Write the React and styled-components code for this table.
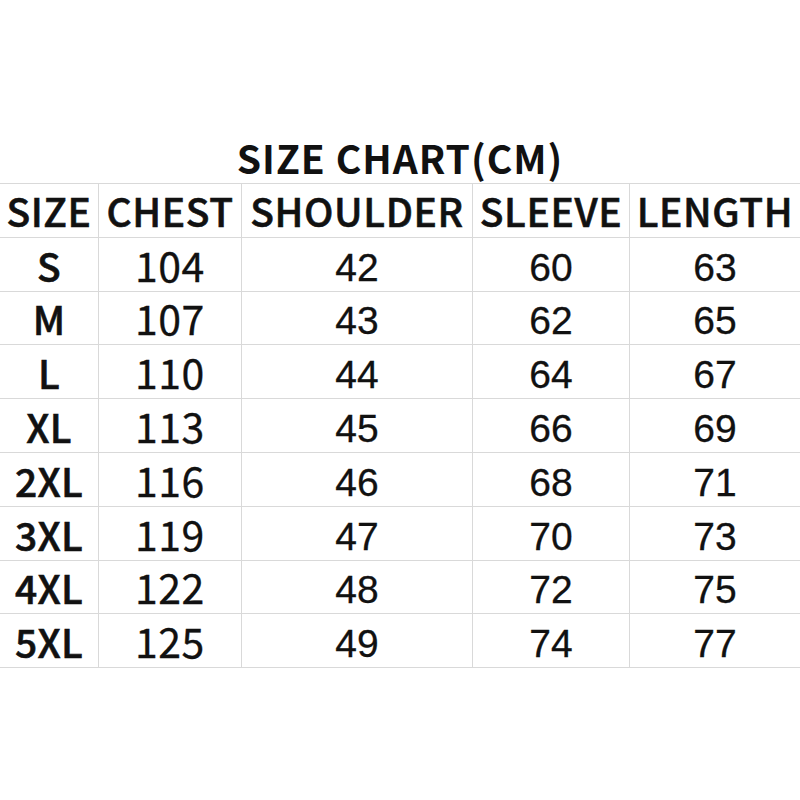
import React from "react";
import styled, { createGlobalStyle } from "styled-components";

const Global = createGlobalStyle`
  html, body { margin: 0; padding: 0; background: #fff; }
  #root { width: 800px; height: 800px; }
`;

const Page = styled.div`
  width: 800px;
  height: 800px;
  background: #fff;
  display: flex;
  flex-direction: column;
  padding-top: 131px;
  box-sizing: border-box;
`;

const Title = styled.div`
  font-family: "Noto Sans CJK SC", "Noto Sans", sans-serif;
  font-weight: 700;
  font-size: 39px;
  line-height: 52px;
  color: #111;
  text-align: center;
  letter-spacing: 1px;
`;

const Table = styled.div`
  display: grid;
  grid-template-columns: 99px 143px 231px 157px 170px;
  grid-auto-rows: 53.8px;
  border-top: 1px solid #d9d9d9;
`;

const fonts = {
  head: { family: '"Noto Sans CJK SC", "Noto Sans", sans-serif', weight: 500, size: "39px", ls: "0.6px", stroke: "0.6px", lh: "44px", pb: "5px" },
  size: { family: '"Noto Sans CJK SC", "Noto Sans", sans-serif', weight: 500, size: "39px", ls: "0.3px", stroke: "0.6px", lh: "44px", pb: "4px" },
  chest: { family: '"Noto Sans CJK SC", "Noto Sans", sans-serif', weight: 400, size: "41px", ls: "0.5px", stroke: "0.3px", lh: "44px", pb: "5px" },
  num: { family: '"Liberation Sans", Arial, sans-serif', weight: 400, size: "39px", ls: "0px", stroke: "0.3px", lh: "46px", pb: "0px" },
};

const Cell = styled.div`
  box-sizing: border-box;
  border-bottom: 1px solid #d9d9d9;
  border-right: ${(p) => (p.$last ? "none" : "1px solid #d9d9d9")};
  display: flex;
  justify-content: center;
  align-items: flex-end;
  white-space: nowrap;
  color: #111;
  font-family: ${(p) => fonts[p.$kind].family};
  font-weight: ${(p) => fonts[p.$kind].weight};
  font-size: ${(p) => fonts[p.$kind].size};
  letter-spacing: ${(p) => fonts[p.$kind].ls};
  -webkit-text-stroke: ${(p) => fonts[p.$kind].stroke} #111;
  line-height: ${(p) => fonts[p.$kind].lh};
  padding-bottom: ${(p) => fonts[p.$kind].pb};
`;

const headers = ["SIZE", "CHEST", "SHOULDER", "SLEEVE", "LENGTH"];
const rows = [
  ["S", 104, 42, 60, 63],
  ["M", 107, 43, 62, 65],
  ["L", 110, 44, 64, 67],
  ["XL", 113, 45, 66, 69],
  ["2XL", 116, 46, 68, 71],
  ["3XL", 119, 47, 70, 73],
  ["4XL", 122, 48, 72, 75],
  ["5XL", 125, 49, 74, 77],
];

export default function App() {
  return (
    <>
      <Global />
      <Page>
        <Title>SIZE CHART(CM)</Title>
        <Table>
          {headers.map((h, i) => (
            <Cell key={h} $kind="head" $last={i === 4}>
              {h}
            </Cell>
          ))}
          {rows.map((r) =>
            r.map((v, i) => (
              <Cell
                key={r[0] + i}
                $kind={i === 0 ? "size" : i === 1 ? "chest" : "num"}
                $last={i === 4}
              >
                {v}
              </Cell>
            ))
          )}
        </Table>
      </Page>
    </>
  );
}
